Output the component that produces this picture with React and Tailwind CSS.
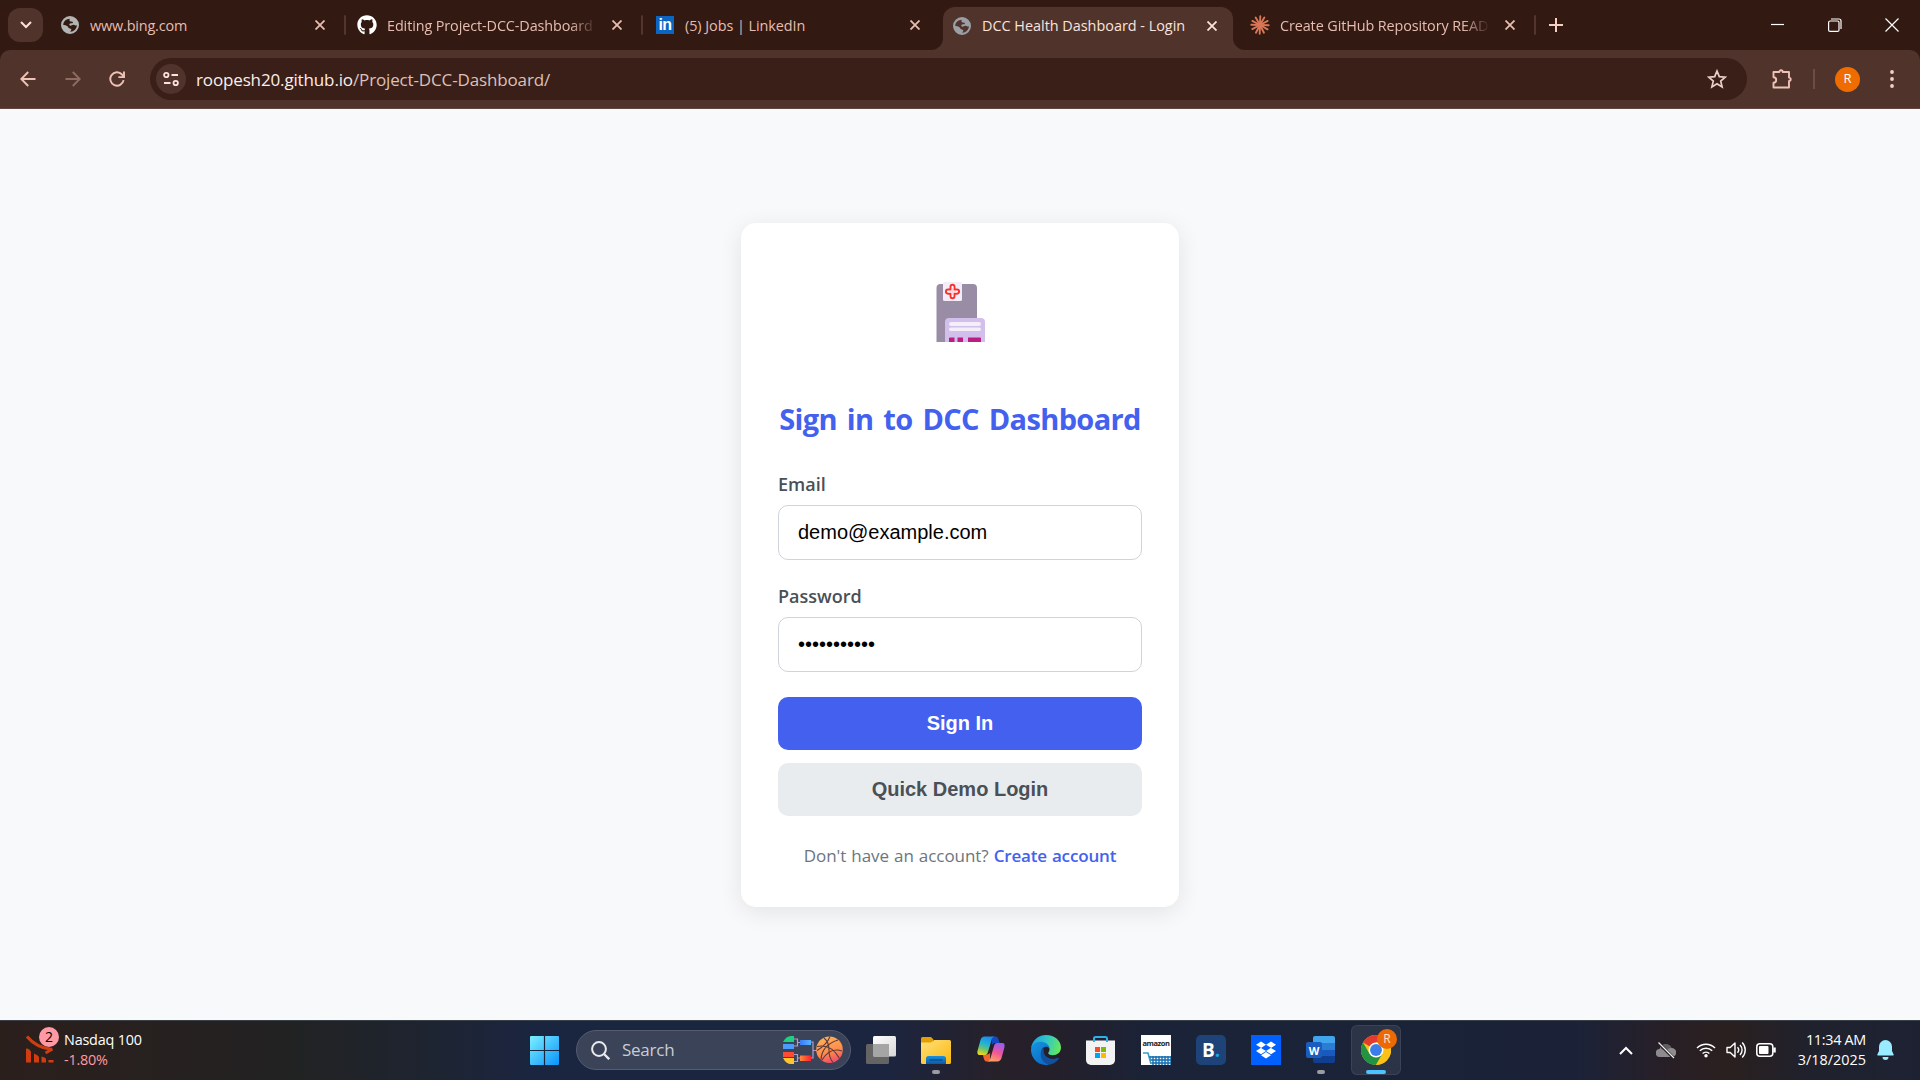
import React from "react";
import { FaGithub, FaDropbox } from "react-icons/fa";

const GLOBE =
  "M8 0a8 8 0 1 0 0 16A8 8 0 0 0 8 0Zm5.9 8.2c-.6.5-1.4.4-2-.1-.7-.6-1.6-.4-2.3.2-.8.6-1.8.5-2.2-.3-.2-.8.5-1.4 1.3-1.5h1.3c.7-.1.8-.9.3-1.3-.6-.5-1.6-.2-2.3-.6-.8-.5-.6-1.5.1-2.1C4.6 2.500 2 5 2 8c1.200.1 2.800.3 3.700 1 .9.6.8 1.500 1.600 1.900.7.400 1.700.200 1.900 1 .1.700-.7 1.100-1 2 3.200.1 5.900-2.500 5.900-5.700Z";

function Globe({ className }) {
  return (
    <svg viewBox="0 0 16 16" className={"h-[18px] w-[18px] shrink-0 " + className} fill="currentColor">
      <path d={GLOBE} fillRule="evenodd" />
    </svg>
  );
}

function LinkedIn() {
  return (
    <span className="flex h-[18px] w-[18px] shrink-0 items-center justify-center bg-[#0a66c2] font-['Liberation_Sans'] text-[16px] leading-none font-bold tracking-[-0.5px] text-white">
      in
    </span>
  );
}

function Claude() {
  const rays = [2, 30, 63, 92, 118, 152, 182, 208, 240, 272, 300, 332];
  return (
    <svg viewBox="-10 -10 20 20" className="h-[20px] w-[20px] shrink-0" stroke="#d97757" strokeWidth="1.9" strokeLinecap="round">
      {rays.map((a) => (
        <line key={a} x1="0" y1="0" x2="8.7" y2="0" transform={`rotate(${a})`} />
      ))}
    </svg>
  );
}

function Cross({ className }) {
  return (
    <svg viewBox="0 0 10 10" className={"h-[10px] w-[10px] shrink-0 " + className} stroke="currentColor" strokeWidth="1.8">
      <path d="M.5.5l9 9M9.5.5l-9 9" />
    </svg>
  );
}

function Tab({ icon, title, active, fade, sep, className }) {
  return (
    <div className={"flex h-full shrink-0 items-center " + className}>
      <div className="flex w-[20px] shrink-0 justify-center">{icon}</div>
      <div
        className={
          "ml-[10px] w-[210px] shrink-0 overflow-hidden pt-px text-[14.4px] leading-[20px] whitespace-nowrap " +
          (active ? "text-[#fbe3dc] " : "text-[#e7bdb1] ") +
          (fade ? "mask-[linear-gradient(90deg,black_87%,transparent)]" : "")
        }
      >
        {title}
      </div>
      <Cross className={"ml-[15px] " + (active ? "text-[#fbe3dc]" : "text-[#e7bdb1]")} />
      <div className={"ml-[19px] h-[20px] w-[2px] shrink-0 rounded " + (sep ? "bg-[#52352d]" : "")} />
    </div>
  );
}

function BrowserTop() {
  return (
    <div className="bg-[#321912]">
      <div className="flex h-[50px] items-center">
        <div className="ml-[8px] flex h-[34px] w-[35px] shrink-0 items-center justify-center rounded-[12px] bg-[#50342c]">
          <svg viewBox="0 0 12 8" className="h-[8px] w-[12px]" fill="none" stroke="#fbe3dc" strokeWidth="2">
            <path d="M1 1l5 5 5-5" />
          </svg>
        </div>
        <Tab className="ml-[17px] w-[297px]" sep icon={<Globe className="text-[#b4b4b4]" />} title={<span className="tracking-[-0.15px]">www.bing.com</span>} />
        <Tab className="w-[298px]" sep fade icon={<FaGithub className="h-[20px] w-[20px] text-white" />} title={<span className="tracking-[-0.1px]">Editing Project-DCC-Dashboard</span>} />
        <Tab className="w-[288px]" icon={<LinkedIn />} title={<span className="tracking-[-0.05px]">(5) Jobs | LinkedIn</span>} />
        <div className="relative mt-[7px] flex h-[43px] w-[290px] shrink-0 rounded-t-[12px] bg-[#50342c]">
          <svg viewBox="0 0 12 12" className="absolute bottom-0 left-[-12px] h-[12px] w-[12px]" fill="#50342c">
            <path d="M12 0v12H0A12 12 0 0 0 12 0Z" />
          </svg>
          <svg viewBox="0 0 12 12" className="absolute right-[-12px] bottom-0 h-[12px] w-[12px]" fill="#50342c">
            <path d="M0 0v12h12A12 12 0 0 1 0 0Z" />
          </svg>
          <Tab className="-mt-[3px] ml-[9px] w-[280px]" active icon={<Globe className="text-[#9aa0a6]" />} title={<span className="tracking-[0px]">DCC Health Dashboard - Login</span>} />
        </div>
        <Tab className="ml-[17px] w-[287px]" sep fade icon={<Claude />} title={<span className="tracking-[-0.1px]">Create GitHub Repository READ</span>} />
        <svg viewBox="0 0 14 14" className="ml-[12px] h-[14px] w-[14px] shrink-0" stroke="#f6cfc4" strokeWidth="2">
          <path d="M7 0v14M0 7h14" />
        </svg>
        <div className="ml-auto flex items-center gap-[43px] pr-[21px] text-white">
          <svg viewBox="0 0 14 14" className="h-[14px] w-[14px]" stroke="currentColor"><path d="M0 6.500h13" strokeWidth="1.200" /></svg>
          <svg viewBox="0 0 14 14" className="h-[14px] w-[14px]" fill="none" stroke="currentColor" strokeWidth="1.200">
            <rect x=".6" y="3" width="10.400" height="10.400" rx="1.500" />
            <path d="M3 1h8a2 2 0 0 1 2 2v8" />
          </svg>
          <svg viewBox="0 0 14 14" className="h-[14px] w-[14px]" stroke="currentColor" strokeWidth="1.200"><path d="M.5.5l13 13M13.5.5l-13 13" /></svg>
        </div>
      </div>
      <div className="flex h-[59px] items-start rounded-t-[10px] border-b border-[#5f453f] bg-[#50342c] pt-[8px]">
        <div className="flex h-[42px] items-center text-[#f0c2b5]">
          <svg viewBox="0 0 16 16" className="ml-[20px] h-[16px] w-[16px]" fill="none" stroke="currentColor" strokeWidth="1.900"><path d="M15.500 8H1.500M8.200 1L1.300 8l6.900 7" /></svg>
          <svg viewBox="0 0 16 16" className="ml-[29px] h-[16px] w-[16px] text-[#8f6c62]" fill="none" stroke="currentColor" strokeWidth="1.900"><path d="M.5 8h14M7.800 1l6.900 7-6.900 7" /></svg>
          <svg viewBox="0 0 16 16" className="ml-[28px] h-[16px] w-[16px]" fill="none" stroke="currentColor" strokeWidth="1.900"><path d="M14.600 9.200A6.700 6.700 0 1 1 13 3.500L14.500 5.500M15 .5v5.600H9.400" /></svg>
        </div>
        <div className="ml-[25px] flex h-[42px] w-[1597px] items-center rounded-full bg-[#3a1f18]">
          <div className="ml-[6px] flex h-[30px] w-[30px] items-center justify-center rounded-full bg-[#50342c]">
            <svg viewBox="0 0 16 16" className="h-[16px] w-[16px]" fill="none" stroke="#fbe3dc" strokeWidth="1.800">
              <circle cx="3.300" cy="4" r="2.200" /><path d="M8.500 4H15M1 12h6.500" /><circle cx="12.700" cy="12" r="2.200" />
            </svg>
          </div>
          <div className="ml-[10px] pt-[2px] text-[17px] leading-[24px] tracking-[-0.14px] whitespace-nowrap text-[#dcc1b8]">
            <span className="text-[#fdeee9]">roopesh20.github.io</span>/Project-DCC-Dashboard/
          </div>
          <svg viewBox="0 0 20 20" className="mr-[20px] ml-auto h-[20px] w-[20px]" fill="none" stroke="#e8d0c8" strokeWidth="1.700">
            <path d="M10 2l2.300 5.600 6 .5-4.600 3.900 1.400 5.900L10 14.700l-5.100 3.200 1.400-5.900L1.700 8.100l6-.5Z" />
          </svg>
        </div>
        <div className="flex h-[42px] grow items-center">
          <svg viewBox="0 0 22 22" className="ml-[24px] h-[22px] w-[22px] shrink-0" fill="none" stroke="#f0c2b5" strokeWidth="1.900" strokeLinejoin="round">
            <path d="M2.500 4h5.800a1.700 1.700 0 0 1 3.400 0H18v5.600a1.700 1.700 0 0 1 0 3.400v6.500H2.500v-4.800a2.700 2.700 0 0 0 0-5.400Z" />
          </svg>
          <div className="ml-[20px] h-[20px] w-[2px] bg-[#6f4d44]" />
          <div className="ml-[20px] flex h-[25px] w-[25px] shrink-0 items-center justify-center rounded-full bg-[#ef6c00] text-[13px] text-white">R</div>
          <svg viewBox="0 0 4 18" className="ml-[30px] h-[18px] w-[4px]" fill="#f6cfc4">
            <circle cx="2" cy="2" r="1.900" /><circle cx="2" cy="9" r="1.900" /><circle cx="2" cy="16" r="1.900" />
          </svg>
        </div>
      </div>
    </div>
  );
}

function HospitalLogo() {
  return (
    <svg viewBox="0 0 50 60" className="ml-[158px] h-[60px] w-[50px]">
      <path d="M.5 60V6a4 4 0 0 1 4-4H37a4 4 0 0 1 4 4v54Z" fill="#998da5" />
      <rect x="7" y="0" width="19" height="19" rx="1.500" fill="#f2edf8" />
      <path d="M14.500 4.800a2 2 0 0 1 4 0v2.700h2.500a2 2 0 0 1 0 4.200h-2.500v2.600a2 2 0 0 1-4 0v-2.600H12a2 2 0 0 1 0-4.200h2.500Z" fill="#fff" stroke="#f8312f" strokeWidth="1.900" />
      <path d="M16.500 6v7.200M13 9.600h7" stroke="#f2c8d6" strokeWidth=".7" />
      <path d="M9 60V40a4 4 0 0 1 4-4h32a4 4 0 0 1 4 4v20Z" fill="#d3bfec" />
      <rect x="13" y="40" width="32" height="4" rx="2" fill="#f3eef8" />
      <rect x="13" y="45.500" width="32" height="3.500" rx="1.700" fill="#f3eef8" />
      <path d="M13 60v-3.500a1 1 0 0 1 1-1h4.500V60ZM21.500 60v-4.500H27V60ZM32 60v-4.500h12a1 1 0 0 1 1 1V60Z" fill="#ba1e83" />
    </svg>
  );
}

function LoginPage() {
  return (
    <div className="flex h-[911px] justify-center bg-[#f8f9fb] pt-[114px]">
      <div className="flex h-[684px] w-[438px] flex-col rounded-[15px] bg-white px-[37px] pt-[59px] shadow-[0_5px_25px_rgba(0,0,0,0.09)]">
        <HospitalLogo />
        <h1 className="mt-[55px] h-[44px] text-center text-[29px] leading-[44px] font-bold tracking-[-0.65px] whitespace-nowrap text-[#4361ee] [word-spacing:3px]">Sign in to DCC Dashboard</h1>
        <label className="mt-[31px] h-[24px] text-[18px] leading-[24px] font-semibold text-[#495057]">Email</label>
        <div className="mt-[9px] flex h-[55px] items-center rounded-[10px] border border-[#ced4da] px-[19px] pb-[2px] font-['Liberation_Sans'] text-[20px] leading-none text-black">demo@example.com</div>
        <label className="mt-[24px] h-[24px] text-[18px] leading-[24px] font-semibold text-[#495057]">Password</label>
        <div className="mt-[9px] flex h-[55px] items-center rounded-[10px] border border-[#ced4da] px-[19px] pb-[2px] font-['Liberation_Sans'] text-[20px] leading-none text-black">•••••••••••</div>
        <div className="mt-[25px] flex h-[53px] items-center justify-center rounded-[10px] bg-[#4361ee] pb-[2px] font-['Liberation_Sans'] text-[20px] leading-none font-bold text-white">Sign In</div>
        <div className="mt-[13px] flex h-[53px] items-center justify-center rounded-[10px] bg-[#e9ecef] pb-[2px] font-['Liberation_Sans'] text-[20px] leading-none font-bold text-[#495057]">Quick Demo Login</div>
        <p className="mt-[28px] text-center text-[17px] leading-[24px] tracking-[-0.06px] whitespace-nowrap text-[#6c757d] [word-spacing:0.7px]">
          Don't have an account? <span className="font-semibold tracking-[-0.16px] text-[#4361ee]">Create account</span>
        </p>
      </div>
    </div>
  );
}

function TaskItem({ children, indicator, active }) {
  return (
    <div className={"relative flex h-[50px] w-[50px] shrink-0 items-center justify-center rounded-[6px] " + (active ? "border border-white/8 bg-white/8" : "")}>
      {children}
      {indicator && <span className="absolute bottom-[1px] left-1/2 h-[4px] w-[8px] -translate-x-1/2 rounded-full bg-[#9a9ca4]" />}
      {active && <span className="absolute bottom-0 left-1/2 h-[4px] w-[20px] -translate-x-1/2 rounded-full bg-[#4cc2ff]" />}
    </div>
  );
}

function Windows() {
  return (
    <svg viewBox="0 0 29 29" className="h-[29px] w-[29px]">
      <defs><linearGradient id="win" gradientUnits="userSpaceOnUse" x1="0" y1="0" x2="29" y2="29"><stop stopColor="#7cf0ff" /><stop offset="1" stopColor="#0a93fb" /></linearGradient></defs>
      <path d="M1 0h12.900v13.900H0V1a1 1 0 0 1 1-1ZM15.100 0H28a1 1 0 0 1 1 1v12.900H15.100ZM0 15.100h13.900V29H1a1 1 0 0 1-1-1ZM15.100 15.100H29V28a1 1 0 0 1-1 1H15.100Z" fill="url(#win)" />
    </svg>
  );
}

function Bracket() {
  return (
    <svg viewBox="0 0 60 28" className="h-[28px] w-[60px]">
      <defs>
        <linearGradient id="bb" x1="0.3" y1="0" x2="0.6" y2="1"><stop stopColor="#ffb258" /><stop offset=".6" stopColor="#ff8a4c" /><stop offset="1" stopColor="#ef4a6c" /></linearGradient>
        <linearGradient id="bl" x1="0" x2="1"><stop stopColor="#3b7bf5" /><stop offset="1" stopColor="#55b3ff" /></linearGradient>
        <linearGradient id="rd" x1="0" x2="1"><stop stopColor="#ff8a3c" /><stop offset="1" stopColor="#ff2030" /></linearGradient>
      </defs>
      <path d="M0 6Q3 0 8 0h3v6Z" fill="#1fd07f" /><path d="M0 8h11v5H0Z" fill="#4a9bfa" />
      <path d="M0 16h11v5H0Z" fill="#ff4a34" /><path d="M0 22h11v6H8Q3 28 0 22Z" fill="#ffc52e" />
      <path d="M11 3h3.500v7H11M14.500 6.500H17M11 18.500h3.500v7H11M14.500 22H17M28 6h2v16h-2M30 14.500h5" fill="none" stroke="#a9a2c8" strokeWidth="1.200" />
      <path d="M17 4h11v5H17Z" fill="url(#bl)" /><path d="M17 19.500h11v5.500H17Z" fill="url(#rd)" />
      <circle cx="46.500" cy="13.700" r="13.300" fill="url(#bb)" />
      <path d="M34 10.500q14-3 22.500 12M41 2q5 4 5 12t4 12.500M55 4q-16 5-17 19.500M47 .5q-3 8-13 14M59 15q-12-4-20 9" fill="none" stroke="#5b3b3a" strokeWidth="1.100" />
    </svg>
  );
}

function TaskView() {
  return (
    <svg viewBox="0 0 30 28" className="h-[28px] w-[30px]">
      <defs><linearGradient id="tv" x1="0" y1="0" x2="1" y2="1"><stop stopColor="#fff" /><stop offset="1" stopColor="#d6d6d6" /></linearGradient></defs>
      <rect y="8" width="23" height="20" rx="1.500" fill="#646464" />
      <rect x="7" width="23" height="20.500" rx="1.500" fill="url(#tv)" />
      <path d="M7 8h16v12.500H8.500A1.500 1.500 0 0 1 7 19Z" fill="#a5a5a5" />
    </svg>
  );
}

function Explorer() {
  return (
    <svg viewBox="0 0 30 27" className="h-[27px] w-[30px]">
      <defs>
        <linearGradient id="fo" x1="0" y1="0" x2="1" y2="1"><stop stopColor="#ffe07a" /><stop offset="1" stopColor="#fbb80f" /></linearGradient>
        <linearGradient id="fb" x1="0" y1="0" x2="0" y2="1"><stop stopColor="#1c8fe0" /><stop offset="1" stopColor="#0a5ca8" /></linearGradient>
      </defs>
      <path d="M0 8V1.500A1.500 1.500 0 0 1 1.500 0H10l2.500 2.500L10 8Z" fill="#e2a006" />
      <path d="M0 5.500h10l3-2.500h15.500A1.500 1.500 0 0 1 30 4.500v21a1.500 1.500 0 0 1-1.500 1.500h-27A1.500 1.500 0 0 1 0 25.500Z" fill="url(#fo)" />
      <path d="M5 27v-5.500a2.500 2.500 0 0 1 2.500-2.500h15a2.500 2.500 0 0 1 2.500 2.500V27Z" fill="url(#fb)" />
      <path d="M8.500 23h13" stroke="#0b4a85" strokeWidth="1.300" />
    </svg>
  );
}

function Copilot() {
  return (
    <svg viewBox="0 0 28 26" className="mb-[2px] h-[26px] w-[28px]">
      <defs>
        <linearGradient id="c1" x1=".6" y1="0" x2=".3" y2="1"><stop stopColor="#1b8be8" /><stop offset=".4" stopColor="#21b3d6" /><stop offset=".7" stopColor="#6cc56a" /><stop offset="1" stopColor="#f5d51a" /></linearGradient>
        <linearGradient id="c2" x1=".7" y1="0" x2=".3" y2="1"><stop stopColor="#9a5cf0" /><stop offset=".5" stopColor="#f0559a" /><stop offset="1" stopColor="#ffa45c" /></linearGradient>
      </defs>
      <path d="M15 .5h3.500c1.500 0 2.400 1.200 3 3L22.600 7H18c-2 0-2.500 1-3 2.500Z" fill="#1549c4" />
      <path d="M13 25.500H9.500c-1.500 0-2.300-1.500-2.800-3.500l-1-3.500H10c2 0 2.700-1 3.200-2.500Z" fill="#f4652e" />
      <path d="M7.500.5H18c-2 0-2.900 1.500-3.500 3.500L11 16c-.6 2-1.500 3-3.200 3H3C.5 19 0 17 .6 14.500L3.500 4C4.200 1.800 5.500.5 7.500.5Z" fill="url(#c1)" />
      <path d="M20.500 25.500H10c2 0 2.900-1.500 3.500-3.500L17 10c.6-2 1.500-3 3.200-3H25c2.500 0 3 2 2.400 4.500L24.500 22c-.7 2.200-2 3.500-4 3.500Z" fill="url(#c2)" />
    </svg>
  );
}

function Edge() {
  return (
    <svg viewBox="0 0 30 30" className="h-[30px] w-[30px]">
      <defs>
        <linearGradient id="e1" x1="0" y1=".3" x2="1" y2=".5"><stop stopColor="#1f9fe0" /><stop offset=".5" stopColor="#30c6c8" /><stop offset="1" stopColor="#66e85a" /></linearGradient>
        <linearGradient id="e2" x1="0" y1="0" x2=".6" y2="1"><stop stopColor="#1595e0" /><stop offset="1" stopColor="#0b6cc8" /></linearGradient>
      </defs>
      <path d="M0 14C.5 6 7 0 15 0c9 0 15 6 15 12.500 0 5-4 7.700-8.200 7.700-3.300 0-4.600-1.200-4.600-2.200 0-.8 1.300-1.300 1.300-3.600C18.500 10.500 14.500 7.500 10 7.500 4.500 7.500 1 10.500 0 14Z" fill="url(#e1)" />
      <path d="M0 14.500c.5-4.500 4.500-7.700 9.500-7.700 4.500 0 8.500 2.700 9 6.700-1.500-2-4-2.500-6-1-3.500 2.500-3 12 5.500 17.200A15 15 0 0 1 0 14.500Z" fill="url(#e2)" />
      <path d="M12 12.800c-3.200 3-4.200 13 5 16.700 4 .5 9-2.500 10.800-6 .3-.7-.3-1-.8-.7-5.500 2.700-13.500.2-14.200-5.800-.2-2 .3-3.200-.8-4.200Z" fill="#11509c" />
    </svg>
  );
}

function Store() {
  return (
    <svg viewBox="0 0 29 29" className="mr-[1px] h-[29px] w-[29px]">
      <path d="M8 6V2.500A1.500 1.500 0 0 1 9.500 1h10A1.500 1.500 0 0 1 21 2.500V6" fill="none" stroke="#2bb0ea" strokeWidth="2" />
      <path d="M0 4.500h29V24a5 5 0 0 1-5 5H5a5 5 0 0 1-5-5Z" fill="#f3f3f3" />
      <path d="M8 4v2M21 4v2" stroke="#2bb0ea" strokeWidth="2" />
      <path d="M9 11h5v5H9Z" fill="#f25022" /><path d="M15 11h5v5h-5Z" fill="#7fba00" />
      <path d="M9 17h5v5H9Z" fill="#00a4ef" /><path d="M15 17h5v5h-5Z" fill="#ffb900" />
    </svg>
  );
}

function Amazon() {
  return (
    <div className="flex h-[30px] w-[30px] flex-col items-center overflow-hidden bg-white">
      <span className="mt-[4px] text-[7.5px] leading-[9px] font-bold tracking-[-0.45px] text-[#222]">amazon</span>
      <svg viewBox="0 0 30 14" className="mt-[3px] h-[14px] w-[30px]">
        <defs><pattern id="net" width="3" height="3" patternUnits="userSpaceOnUse"><rect width="3" height="3" fill="#2679b4" /><circle cx="1.500" cy="1.500" r=".8" fill="#fff" /></pattern></defs>
        <path d="M2 2h5l3 11" fill="none" stroke="#3a9cc8" strokeWidth="1.600" />
        <path d="M8 5h22v9H11Z" fill="url(#net)" />
      </svg>
    </div>
  );
}

function Word() {
  return (
    <div className="relative mr-[1px] mb-[1px] h-[27px] w-[29px]">
      <div className="ml-[7px] flex h-[27px] flex-col overflow-hidden rounded-[2px]">
        <span className="grow bg-[#41a5ee]" /><span className="grow bg-[#2b7cd3]" /><span className="grow bg-[#185abd]" /><span className="grow bg-[#103f91]" />
      </div>
      <span className="absolute top-[6px] left-0 flex h-[16px] w-[16px] items-center justify-center rounded-[2px] bg-[#1a5dbe] text-[11px] leading-none font-bold text-white">W</span>
    </div>
  );
}

function Chrome() {
  return (
    <svg viewBox="0 0 48 48" className="h-[30px] w-[30px]">
      <circle cx="24" cy="24" r="24" fill="#fbc116" />
      <path d="M24 24L3.200 12A24 24 0 0 1 44.800 12H24Z" fill="#e33b2e" />
      <path d="M3.200 12A24 24 0 0 0 24 48L34.400 30 24 24 13.600 30Z" fill="#229342" />
      <path d="M24 48l10.400-18L24 24V12h20.800A24 24 0 0 1 24 48Z" fill="#fbc116" />
      <circle cx="24" cy="24" r="12" fill="#fff" /><circle cx="24" cy="24" r="9.500" fill="#3b7de9" />
    </svg>
  );
}

function Taskbar() {
  return (
    <div className="flex h-[60px] items-center border-t border-[#3a4048] bg-[linear-gradient(90deg,#2b1f1c_0%,#222222_15%,#1e2430_22%,#1a2540_28%,#1b2540_46%,#272029_52%,#241f2a_55%,#1a2338_60%,#1b2238_82%,#281f26_87%,#2a201f_90%,#20212c_94%,#1d2233_100%)] pb-[1px]">
      <div className="relative ml-[26px] h-[50px] w-[28px] shrink-0">
        <svg viewBox="0 0 28 28" className="mt-[10px] h-[28px] w-[28px]" fill="#d13d10">
          <path d="M1 1.500Q10 12.500 26 14.500M26.500 14l-7 4" fill="none" stroke="#d13d10" strokeWidth="3" />
          <path d="M0 27.500V14.500q0-1.500 1.500-1l2 1.300q1.500 1 1.500 2.500v10.200ZM8 27.500v-9l3 1.500q2 1 2 2.500v5ZM15.500 27.500V21.500l3 1q1.500.5 1.500 2v3ZM22.500 27.500v-2.500h5v2.500Z" />
        </svg>
        <span className="absolute top-[2px] left-[13px] flex h-[20px] w-[20px] items-center justify-center rounded-full bg-[#ff99a4] text-[14px] leading-none text-black">2</span>
      </div>
      <div className="ml-[10px] w-[120px] shrink-0 pb-[1px] text-[14.4px] leading-[20px] tracking-[-0.2px] whitespace-nowrap">
        <div className="text-white">Nasdaq 100</div>
        <div className="text-[#ff99a4]">-1.80%</div>
      </div>
      <div className="ml-[346px] shrink-0"><Windows /></div>
      <div className="ml-[17px] flex h-[40px] w-[275px] shrink-0 items-center rounded-full border border-[#555c70] bg-[#3b4358]">
        <svg viewBox="0 0 19 19" className="ml-[14px] h-[19px] w-[19px]" fill="none" stroke="#e8eaee" strokeWidth="2"><circle cx="8" cy="8" r="6.900" /><path d="M13 13l5.200 5.200" strokeWidth="2.400" /></svg>
        <span className="ml-[12px] text-[17px] tracking-[-0.25px] text-[#c9ccd4]">Search</span>
        <span className="mr-[7px] ml-auto"><Bracket /></span>
      </div>
      <div className="ml-[5px] flex shrink-0 gap-[5px]">
        <TaskItem><TaskView /></TaskItem>
        <TaskItem indicator><Explorer /></TaskItem>
        <TaskItem><Copilot /></TaskItem>
        <TaskItem><Edge /></TaskItem>
        <TaskItem><Store /></TaskItem>
        <TaskItem><Amazon /></TaskItem>
        <TaskItem>
          <span className="flex h-[30px] w-[30px] items-center justify-center rounded-[5px] bg-[#1d4379] text-[19px] leading-none font-bold text-white">B<span className="text-[#12a5e8]">.</span></span>
        </TaskItem>
        <TaskItem>
          <span className="flex h-[30px] w-[30px] items-center justify-center bg-[#0061fe]"><FaDropbox className="h-[20px] w-[20px] text-white" /></span>
        </TaskItem>
        <TaskItem indicator><Word /></TaskItem>
        <TaskItem active>
          <Chrome />
          <span className="absolute top-[3px] right-[3px] flex h-[20px] w-[20px] items-center justify-center rounded-full bg-[#ec6a06] text-[12px] leading-none text-[#ffe3cc]">R</span>
        </TaskItem>
      </div>
      <div className="ml-auto flex items-center pr-[26px] text-white">
        <svg viewBox="0 0 14 9" className="mr-[23px] h-[9px] w-[14px]" fill="none" stroke="currentColor" strokeWidth="2"><path d="M1 8l6-6 6 6" /></svg>
        <svg viewBox="0 0 20 17" className="mr-[20px] h-[17px] w-[20px]">
          <path d="M4 15a4 4 0 0 1-.5-8A6.500 6.500 0 0 1 15.500 6a4.500 4.500 0 0 1 .5 9Z" fill="#8d8b8d" />
          <path d="M5 4.500A6 6 0 0 1 15.500 6q-4 0-5 3L5 7Z" fill="#625f63" />
          <path d="M2.500 1L18 16.500" stroke="#251f24" strokeWidth="3" /><path d="M2.500.5L18 16" stroke="#eee" strokeWidth="1.300" />
        </svg>
        <svg viewBox="0 0 20 16" className="mr-[10px] h-[16px] w-[20px]" fill="none" stroke="currentColor" strokeWidth="1.500">
          <path d="M1 6a12.700 12.700 0 0 1 18 0M3.800 8.800a8.800 8.800 0 0 1 12.400 0M6.600 11.500a4.900 4.900 0 0 1 6.800 0" /><circle cx="10" cy="13.700" r="1.700" fill="currentColor" stroke="none" />
        </svg>
        <svg viewBox="0 0 20 18" className="mr-[10px] h-[18px] w-[20px]" fill="none" stroke="currentColor" strokeWidth="1.400" strokeLinejoin="round">
          <path d="M1 6.500h3.200L9 2v14l-4.800-4.500H1Z" /><path d="M11.500 6.300a4 4 0 0 1 0 5.400M14 3.900a7.300 7.300 0 0 1 0 10.200M16.200 1.500a10.800 10.800 0 0 1 0 15" />
        </svg>
        <svg viewBox="0 0 20 14" className="mr-[20px] h-[14px] w-[20px]" fill="none" stroke="currentColor" strokeWidth="1.500">
          <rect x=".8" y=".8" width="16" height="12.400" rx="3" /><rect x="3" y="3" width="9.500" height="8" rx="1" fill="currentColor" stroke="none" /><path d="M18.500 4.500v5" strokeWidth="2.500" />
        </svg>
        <div className="w-[70px] pb-[1px] text-right text-[14.4px] leading-[20px] whitespace-nowrap">
          <div className="tracking-[-0.3px]">11:34 AM</div>
          <div>3/18/2025</div>
        </div>
        <svg viewBox="0 0 17 20" className="ml-[11px] h-[20px] w-[17px]" fill="#99ebff">
          <path d="M8.500 0a6.500 6.500 0 0 0-6.500 6.500v4.500L.3 14.500q-.3 1 .7 1h15q1 0 .7-1L15 11V6.500A6.500 6.500 0 0 0 8.500 0ZM5.500 17a3 3 0 0 0 6 0Z" />
        </svg>
      </div>
    </div>
  );
}

export default function App() {
  return (
    <div className="flex h-[1080px] w-[1920px] flex-col overflow-hidden font-['Open_Sans','Noto_Sans',sans-serif]">
      <BrowserTop />
      <LoginPage />
      <Taskbar />
    </div>
  );
}
